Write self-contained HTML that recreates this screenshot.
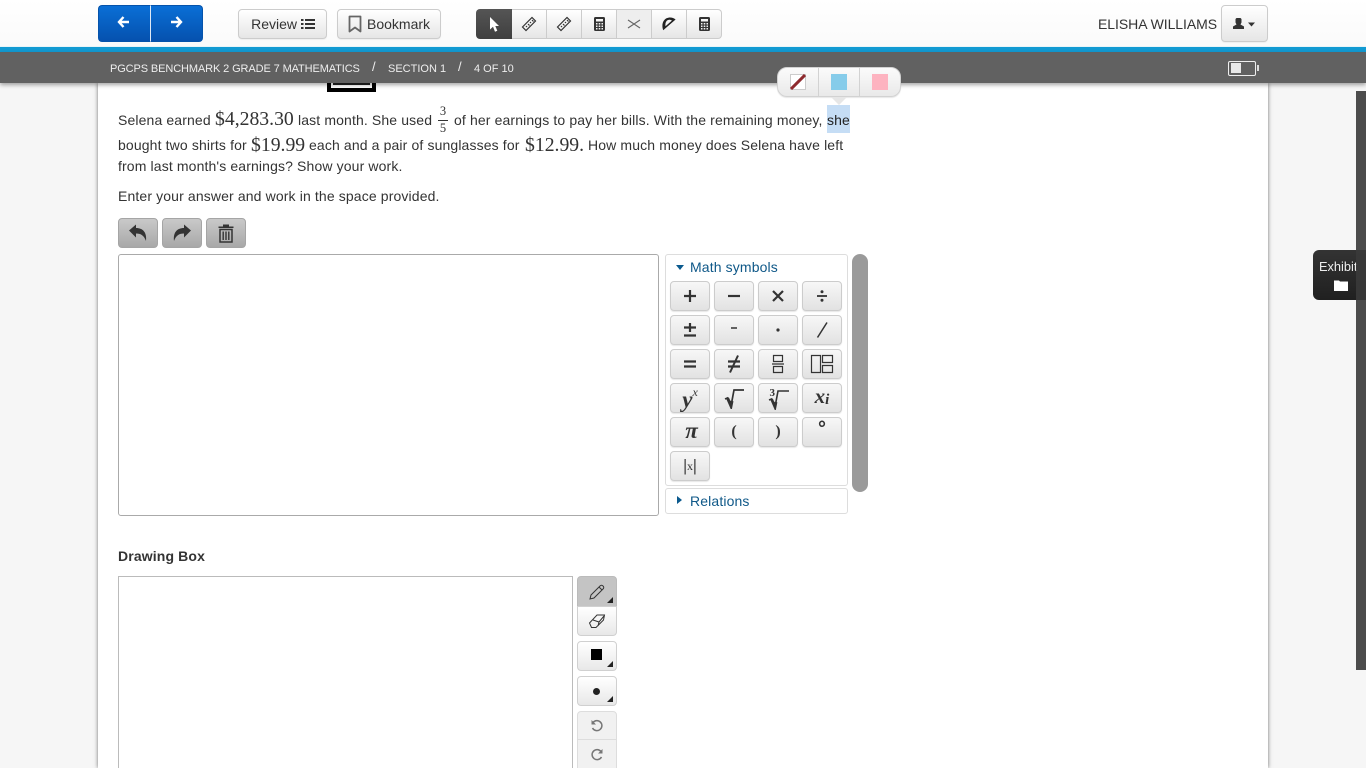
<!DOCTYPE html>
<html lang="en"><head><meta charset="utf-8"><title>Test</title>
<style>
*{box-sizing:border-box}
html,body{margin:0;padding:0;width:1366px;height:768px;overflow:hidden;background:#f6f6f6;font-family:"Liberation Sans",sans-serif;color:#333}
.a{position:absolute}
#wrap{position:relative;width:1366px;height:768px;overflow:hidden}
#main{left:98px;top:83px;width:1170px;height:685px;background:#fff;box-shadow:0 0 4px rgba(0,0,0,.55)}
#top{left:0;top:0;width:1366px;height:46px;background:linear-gradient(#fff,#fafafa)}
#blue{left:0;top:47px;width:1366px;height:5px;background:#129ad2}
#blue2{left:0;top:46px;width:1366px;height:1px;background:#e8f4f8}
#bar{left:0;top:52px;width:1366px;height:31px;background:#616161;color:#eee;font-size:11px;box-shadow:0 2px 4px rgba(0,0,0,.35)}
#bar span{position:absolute;top:11px;line-height:13px;white-space:nowrap}
.btn{position:absolute;background:linear-gradient(#fff,#e6e6e6);border:1px solid #ccc;border-radius:4px;box-shadow:inset 0 1px 0 #fff,0 1px 1px rgba(0,0,0,.05);font-size:14px;color:#333;display:flex;align-items:center;justify-content:center;white-space:nowrap}
.seg{position:absolute;top:9px;height:30px;background:linear-gradient(#fff,#e6e6e6);border:1px solid #ccc;border-left:0;display:flex;align-items:center;justify-content:center}
.t{position:absolute;font-size:14px;line-height:20px;white-space:nowrap;color:#333;letter-spacing:.13px}
.m{position:absolute;font-family:"Liberation Serif",serif;font-size:19.7px;line-height:20px;white-space:nowrap;color:#333}
.g{position:absolute;width:40px;height:30px;background:linear-gradient(#f7f7f7,#e2e2e2);border:1px solid #ccc;border-radius:4px;display:flex;align-items:center;justify-content:center;color:#333;box-shadow:0 1px 1px rgba(0,0,0,.1)}
.gb{position:absolute;top:218px;width:40px;height:30px;background:linear-gradient(#c9c9c9,#a8a8a8);border:1px solid #a5a5a5;border-radius:4px;display:flex;align-items:center;justify-content:center}
.d{position:absolute;left:577px;width:40px;background:linear-gradient(#fff,#e8e8e8);border:1px solid #d0d0d0;display:flex;align-items:center;justify-content:center}
.tri{position:absolute;right:3px;bottom:3px;width:0;height:0;border-left:6px solid transparent;border-bottom:6px solid #222}
svg{display:block}
</style></head><body><div id="wrap">
<div class="a" id="main"></div>

<!-- image remnant -->
<div class="a" style="left:327px;top:83px;width:49px;height:9px;border:4px solid #000;border-top:0;background:#fff"></div>
<div class="a" style="left:333px;top:83px;width:37px;height:2px;background:#222"></div>

<!-- question -->
<div class="t" style="left:118px;top:110px">Selena earned</div>
<div class="m" style="left:215px;top:109px">$4,283.30</div>
<div class="t" style="left:298px;top:110px">last month. She used</div>
<div class="a" style="left:437px;top:105px;width:12px;text-align:center;font:12.500px/13px 'Liberation Serif',serif;color:#333">3</div>
<div class="a" style="left:438px;top:120px;width:10px;height:1px;background:#333"></div>
<div class="a" style="left:437px;top:122px;width:12px;text-align:center;font:12.500px/13px 'Liberation Serif',serif;color:#333">5</div>
<div class="t" style="left:454px;top:110px">of her earnings to pay her bills. With the remaining money,</div>
<div class="a" style="left:827px;top:105px;width:23px;height:28px;background:#c5ddf5"></div>
<div class="t" style="left:827px;top:110px;color:#222">she</div>
<div class="t" style="left:118px;top:135px">bought two shirts for</div>
<div class="m" style="left:251px;top:135px">$19.99</div>
<div class="t" style="left:309px;top:135px">each and a pair of sunglasses for</div>
<div class="m" style="left:525px;top:135px">$12.99.</div>
<div class="t" style="left:588px;top:135px">How much money does Selena have left</div>
<div class="t" style="left:118px;top:156px">from last month's earnings? Show your work.</div>
<div class="t" style="left:118px;top:186px">Enter your answer and work in the space provided.</div>

<!-- undo / redo / trash -->
<div class="gb" style="left:118px"><svg width="22" height="20" viewBox="0 0 22 20"><path d="M2 7.500 9 1.500v3.500c7 0 11 4.500 10 13-2-5.500-5-7.500-10-7.500v4z" fill="#333"/></svg></div>
<div class="gb" style="left:162px"><svg width="22" height="20" viewBox="0 0 22 20"><path d="M20 7.500 13 1.500v3.500C6 5 2 9.500 3 18c2-5.500 5-7.500 10-7.500v4z" fill="#333"/></svg></div>
<div class="gb" style="left:206px"><svg width="16" height="20" viewBox="0 0 16 20"><path d="M5 3.500V1.500h6v2h4.500V5H.5V3.500z" fill="#333"/><path d="M2 6.500h12V19H2z" fill="none" stroke="#333" stroke-width="1.500"/><path d="M5.200 8.500v8.500M8 8.500v8.500M10.800 8.500v8.500" stroke="#333" stroke-width="1.400"/></svg></div>

<!-- answer box -->
<div class="a" style="left:118px;top:254px;width:541px;height:262px;border:1px solid #aaa;border-radius:3px;background:#fff"></div>

<!-- symbols panel -->
<div class="a" style="left:665px;top:254px;width:183px;height:232px;border:1px solid #ddd;border-radius:3px;background:#fff"></div>
<div class="a" style="left:676px;top:265px;width:0;height:0;border-left:4.500px solid transparent;border-right:4.500px solid transparent;border-top:5px solid #0b5a8e"></div>
<div class="t" style="left:690px;top:257px;color:#0f5888">Math symbols</div>
<div class="a" style="left:665px;top:488px;width:183px;height:26px;border:1px solid #ddd;border-radius:3px;background:#fff"></div>
<div class="a" style="left:677px;top:496px;width:0;height:0;border-top:4.500px solid transparent;border-bottom:4.500px solid transparent;border-left:5px solid #0b5a8e"></div>
<div class="t" style="left:690px;top:491px;color:#0f5888">Relations</div>
<div class="a" style="left:852px;top:254px;width:16px;height:238px;background:#9a9a9a;border-radius:8px"></div>

<!-- row 1 -->
<div class="g" style="left:670px;top:281px"><svg width="14" height="14" viewBox="0 0 14 14"><path d="M7 1v12M1 7h12" stroke="#333" stroke-width="2.200"/></svg></div>
<div class="g" style="left:714px;top:281px"><svg width="14" height="14" viewBox="0 0 14 14"><path d="M1 7h12" stroke="#333" stroke-width="2.200"/></svg></div>
<div class="g" style="left:758px;top:281px"><svg width="14" height="14" viewBox="0 0 14 14"><path d="M2 2l10 10M12 2 2 12" stroke="#333" stroke-width="2.200"/></svg></div>
<div class="g" style="left:802px;top:281px"><svg width="14" height="14" viewBox="0 0 14 14"><path d="M2 7h10" stroke="#333" stroke-width="1.800"/><circle cx="7" cy="2.800" r="1.500" fill="#333"/><circle cx="7" cy="11.200" r="1.500" fill="#333"/></svg></div>
<!-- row 2 -->
<div class="g" style="left:670px;top:315px"><svg width="14" height="16" viewBox="0 0 14 16"><path d="M7 1v9M1 5.500h12M1 13.500h12" stroke="#333" stroke-width="2.200"/></svg></div>
<div class="g" style="left:714px;top:315px"><svg width="14" height="14" viewBox="0 0 14 14"><path d="M4 5h6" stroke="#333" stroke-width="1.500"/></svg></div>
<div class="g" style="left:758px;top:315px"><svg width="14" height="14" viewBox="0 0 14 14"><circle cx="7" cy="7" r="1.600" fill="#333"/></svg></div>
<div class="g" style="left:802px;top:315px"><svg width="14" height="16" viewBox="0 0 14 16"><path d="M12 .5 2.500 15.500" stroke="#333" stroke-width="1.500"/></svg></div>
<!-- row 3 -->
<div class="g" style="left:670px;top:349px"><svg width="14" height="14" viewBox="0 0 14 14"><path d="M1 4.500h12M1 9.500h12" stroke="#333" stroke-width="2.200"/></svg></div>
<div class="g" style="left:714px;top:349px"><svg width="14" height="18" viewBox="0 0 14 18"><path d="M1 6.500h12M1 11.500h12" stroke="#333" stroke-width="2.200"/><path d="M11 .5 3 17.500" stroke="#333" stroke-width="2"/></svg></div>
<div class="g" style="left:758px;top:349px"><svg width="14" height="20" viewBox="0 0 14 20"><path d="M2.500 1.500h9v6h-9zM1 10h12M2.500 12.500h9v6h-9z" fill="none" stroke="#333" stroke-width="1.200"/></svg></div>
<div class="g" style="left:802px;top:349px"><svg width="24" height="20" viewBox="0 0 24 20"><path d="M1.500 1.500h9v17h-9zM12.500 1.500h10v7h-10zM12.500 11.500h10v7h-10z" fill="none" stroke="#333" stroke-width="1.200"/></svg></div>
<!-- row 4 -->
<div class="g" style="left:670px;top:383px;font:italic bold 23px 'Liberation Serif',serif;padding-top:4px"><span>y</span><span style="font-size:12px;font-weight:400;position:relative;top:-8px">x</span></div>
<div class="g" style="left:714px;top:383px"><svg width="22" height="22" viewBox="0 0 22 22"><path d="M2 12l2.500-1 3.500 8 3-16h10" fill="none" stroke="#333" stroke-width="1.700"/><path d="M4.500 11l3.500 8 1-5" fill="none" stroke="#333" stroke-width="3"/></svg></div>
<div class="g" style="left:758px;top:383px"><svg width="24" height="24" viewBox="0 0 24 24"><path d="M3 14l2.500-1 3.500 8 3-16h11" fill="none" stroke="#333" stroke-width="1.600"/><path d="M5.500 13l3.500 8 1-5" fill="none" stroke="#333" stroke-width="2.800"/><text x="3.500" y="10" font-family="Liberation Serif" font-size="11" font-weight="700" fill="#333">3</text></svg></div>
<div class="g" style="left:802px;top:383px;font:italic bold 21px 'Liberation Serif',serif;padding-bottom:3px"><span>x</span><span style="font-size:15px;position:relative;top:4px">i</span></div>
<!-- row 5 -->
<div class="g" style="left:670px;top:417px;font:italic bold 23px 'Liberation Serif',serif;padding-left:3px;padding-bottom:3px">&#960;</div>
<div class="g" style="left:714px;top:417px;font:bold 16px 'Liberation Serif',serif">(</div>
<div class="g" style="left:758px;top:417px;font:bold 16px 'Liberation Serif',serif">)</div>
<div class="g" style="left:802px;top:417px;font:bold 20px 'Liberation Sans',sans-serif;padding-bottom:5px">&#176;</div>
<!-- row 6 -->
<div class="g" style="left:670px;top:451px;font:18px 'Liberation Serif',serif"><span style="font-weight:700;font-size:17px">|</span><span style="font-size:12px">x</span><span style="font-weight:700;font-size:17px">|</span></div>

<!-- drawing -->
<div class="t" style="left:118px;top:546px;font-weight:700">Drawing Box</div>
<div class="a" style="left:118px;top:576px;width:455px;height:200px;border:1px solid #bbb;background:#fff"></div>
<div class="d" style="top:576px;height:31px;border-radius:4px 4px 0 0;background:#c4c4c4;border-color:#bbb"><svg width="18" height="18" viewBox="0 0 18 18"><path d="M3 12 12 3c1-1 2-1 3 0s1 2 0 3l-9 9-4 1zM11 4l3 3" fill="none" stroke="#333"/></svg><i class="tri"></i></div>
<div class="d" style="top:606px;height:30px;border-radius:0 0 4px 4px"><svg width="18" height="16" viewBox="0 0 18 16"><path d="M1.500 10 9 2h7.500l-1 5L8 14.500H3.500zM5 7l6 2 5-6M11 9l-1 4" fill="none" stroke="#333"/></svg></div>
<div class="d" style="top:641px;height:30px;border-radius:4px"><div style="width:11px;height:11px;background:#000;margin-bottom:3px;margin-right:2px"></div><i class="tri"></i></div>
<div class="d" style="top:676px;height:30px;border-radius:4px"><div style="width:7px;height:7px;background:#222;border-radius:50%;margin-right:1px"></div><i class="tri"></i></div>
<div class="d" style="top:711px;height:29px;border-radius:4px 4px 0 0;background:#f1f1f1;border-color:#ddd"><svg width="14" height="14" viewBox="0 0 14 14"><path d="M3 3.500A5 5 0 1 1 2.500 9" fill="none" stroke="#777" stroke-width="1.500"/><path d="M1.500 1v4.500H6z" fill="#777"/></svg></div>
<div class="d" style="top:739px;height:32px;background:#f1f1f1;border-color:#ddd"><svg width="14" height="14" viewBox="0 0 14 14"><path d="M11 3.500A5 5 0 1 0 11.500 9" fill="none" stroke="#777" stroke-width="1.500"/><path d="M12.500 1v4.500H8z" fill="#777"/></svg></div>

<!-- right exhibit & scrollbar -->
<div class="a" style="left:1313px;top:250px;width:53px;height:50px;background:linear-gradient(#333,#202020);border-radius:6px 0 0 6px"></div>
<div class="a" style="left:1319px;top:259px;font-size:12.800px;line-height:15px;color:#eee;white-space:nowrap">Exhibit</div>
<svg class="a" style="left:1334px;top:279px" width="14" height="13" viewBox="0 0 14 13"><path d="M0 1.500h5l1 1h8V12H0z" fill="#fff"/></svg>
<div class="a" style="left:1356px;top:91px;width:10px;height:579px;background:rgba(58,58,58,.9)"></div>

<!-- header -->
<div class="a" id="top"></div>
<div class="a" id="blue"></div><div class="a" id="blue2"></div>
<div class="a" id="bar">
<span style="left:110px;letter-spacing:-.11px">PGCPS BENCHMARK 2 GRADE 7 MATHEMATICS</span>
<span style="left:372px;top:8px;font-size:13px">/</span>
<span style="left:388px">SECTION 1</span>
<span style="left:458px;top:8px;font-size:13px">/</span>
<span style="left:474px">4 OF 10</span>
</div>
<div class="a" style="left:1228px;top:61px;width:28px;height:15px;border:1px solid #eee;border-radius:2px"></div>
<div class="a" style="left:1231px;top:63px;width:10px;height:10px;background:#e8e8e8"></div>
<div class="a" style="left:1257px;top:65px;width:2px;height:6px;background:#ddd"></div>

<!-- nav -->
<div class="a" style="left:98px;top:5px;width:52px;height:37px;background:linear-gradient(#0a6fd6,#0551ae);border-radius:4px 0 0 4px;border:1px solid #0553ab;border-right:0"></div>
<div class="a" style="left:150px;top:5px;width:53px;height:37px;background:linear-gradient(#0a6fd6,#0551ae);border-radius:0 4px 4px 0;border:1px solid #0553ab;border-left:1px solid #dfe9f5"></div>
<svg class="a" style="left:117px;top:15px" width="13" height="14" viewBox="0 0 13 14"><path d="M6.500 2 2 7l4.500 5M2.500 7H12" fill="none" stroke="#fff" stroke-width="2.400"/></svg>
<svg class="a" style="left:170px;top:15px" width="13" height="14" viewBox="0 0 13 14"><path d="M6.500 2 11 7l-4.500 5M10.500 7H1" fill="none" stroke="#fff" stroke-width="2.400"/></svg>

<div class="btn" style="left:238px;top:9px;width:89px;height:30px;padding-left:1px">Review&nbsp;<svg width="14" height="12" viewBox="0 0 14 12"><path d="M0 1h2.500v2H0zM4 1h10v2H4zM0 5h2.500v2H0zM4 5h10v2H4zM0 9h2.500v2H0zM4 9h10v2H4z" fill="#333"/></svg></div>
<div class="btn" style="left:337px;top:9px;width:104px;height:30px;justify-content:flex-start;padding-left:10px"><svg width="14" height="18" viewBox="0 0 14 18" style="margin-right:5px"><path d="M1.500 1.500h11V16.500l-5.500-4-5.500 4z" fill="none" stroke="#666" stroke-width="1.800" stroke-linejoin="round"/></svg>Bookmark</div>

<!-- tools -->
<div class="a" style="left:476px;top:9px;width:36px;height:30px;background:linear-gradient(#555,#3f3f3f);border-radius:4px 0 0 4px;display:flex;align-items:center;justify-content:center"><svg width="12" height="15" viewBox="0 0 12 15"><path d="M2 0v12.500l3-2.800 2 5 2.300-1-2-4.700H11z" fill="#fff"/></svg></div>
<div class="seg" style="left:512px;width:35px"><svg width="16" height="16" viewBox="0 0 16 16"><path d="M1.500 11 11 1.500 14.500 5 5 14.500zM5 10l1 1M7 8l1.500 1.500M9 6l1 1M11 4l1.500 1.500" fill="none" stroke="#333" stroke-width="1.200"/></svg></div>
<div class="seg" style="left:547px;width:35px"><svg width="16" height="16" viewBox="0 0 16 16"><path d="M1.500 11 11 1.500 14.500 5 5 14.500zM5 10l1 1M7 8l1.500 1.500M9 6l1 1M11 4l1.500 1.500" fill="none" stroke="#333" stroke-width="1.200"/></svg></div>
<div class="seg" style="left:582px;width:35px"><svg width="11" height="14" viewBox="0 0 11 14"><path fill-rule="evenodd" d="M1.500 0h8A1.500 1.500 0 0 1 11 1.500v11A1.500 1.500 0 0 1 9.500 14h-8A1.500 1.500 0 0 1 0 12.500v-11A1.500 1.500 0 0 1 1.500 0zM2 2v2.500h7V2zM2 6v1.500h1.500V6zm2.700 0v1.500h1.600V6zm2.800 0v1.500H9V6zM2 8.500V10h1.500V8.500zm2.700 0V10h1.600V8.500zm2.800 0V10H9V8.500zM2 11v1.500h1.500V11zm2.700 0v1.500h1.600V11zm2.800 0v1.500H9V11z" fill="#333"/></svg></div>
<div class="seg" style="left:617px;width:35px;background:#eee"><svg width="14" height="10" viewBox="0 0 14 10"><path d="M1 1l12 8M13 1 1 9" stroke="#666" stroke-width="1.100"/></svg></div>
<div class="seg" style="left:652px;width:35px"><svg width="14" height="14" viewBox="0 0 14 14"><path fill-rule="evenodd" d="M1.200 13.200C-.5 8.500.5 3.500 4.500 1.300 7.500-.2 11 .3 13.600 2.500zM3.500 9.300 10 3.500C8 2.300 6 2.500 4.800 3.800 3.500 5.200 3.200 7.200 3.500 9.300z" fill="#222"/></svg></div>
<div class="seg" style="left:687px;width:35px;border-radius:0 4px 4px 0"><svg width="11" height="14" viewBox="0 0 11 14"><path fill-rule="evenodd" d="M1.500 0h8A1.500 1.500 0 0 1 11 1.500v11A1.500 1.500 0 0 1 9.500 14h-8A1.500 1.500 0 0 1 0 12.500v-11A1.500 1.500 0 0 1 1.500 0zM2 2v2.500h7V2zM2 6v1.500h1.500V6zm2.700 0v1.500h1.600V6zm2.800 0v1.500H9V6zM2 8.500V10h1.500V8.500zm2.700 0V10h1.600V8.500zm2.800 0V10H9V8.500zM2 11v1.500h1.500V11zm2.700 0v1.500h1.600V11zm2.800 0v1.500H9V11z" fill="#333"/></svg></div>

<!-- user -->
<div class="t" style="left:1098px;top:14px;letter-spacing:-.05px">ELISHA WILLIAMS</div>
<div class="btn" style="left:1221px;top:5px;width:47px;height:37px"><svg width="24" height="12" viewBox="0 0 24 12"><path d="M3.500 0H7.500L8.500 1v3.500L7.500 6.500 11 8.500V11H0V8.500L3.500 6.500 2.500 4.500V1z" fill="#333"/><path d="M15 4.500h7l-3.500 4z" fill="#333"/></svg></div>

<!-- highlight popover -->
<div class="a" style="left:777px;top:67px;width:124px;height:30px;background:linear-gradient(#fbfbfb,#e9e9e9);border:1px solid #d2d2d2;border-radius:10px;box-shadow:0 1px 1px rgba(0,0,0,.1)"></div>
<div class="a" style="left:818px;top:68px;width:1px;height:28px;background:#d2d2d2"></div>
<div class="a" style="left:859px;top:68px;width:1px;height:28px;background:#d2d2d2"></div>
<div class="a" style="left:831px;top:97px;width:0;height:0;border-left:8px solid transparent;border-right:8px solid transparent;border-top:8px solid #e6e6e6"></div>
<svg class="a" style="left:790px;top:74px" width="16" height="16" viewBox="0 0 16 16"><rect x=".5" y=".5" width="15" height="15" fill="#fff" stroke="#ccc"/><path d="M1 15 15 1" stroke="#8e2a2e" stroke-width="3"/></svg>
<div class="a" style="left:831px;top:74px;width:16px;height:16px;background:#86ccea"></div>
<div class="a" style="left:872px;top:74px;width:16px;height:16px;background:#fdb3c0"></div>
</div></body></html>
